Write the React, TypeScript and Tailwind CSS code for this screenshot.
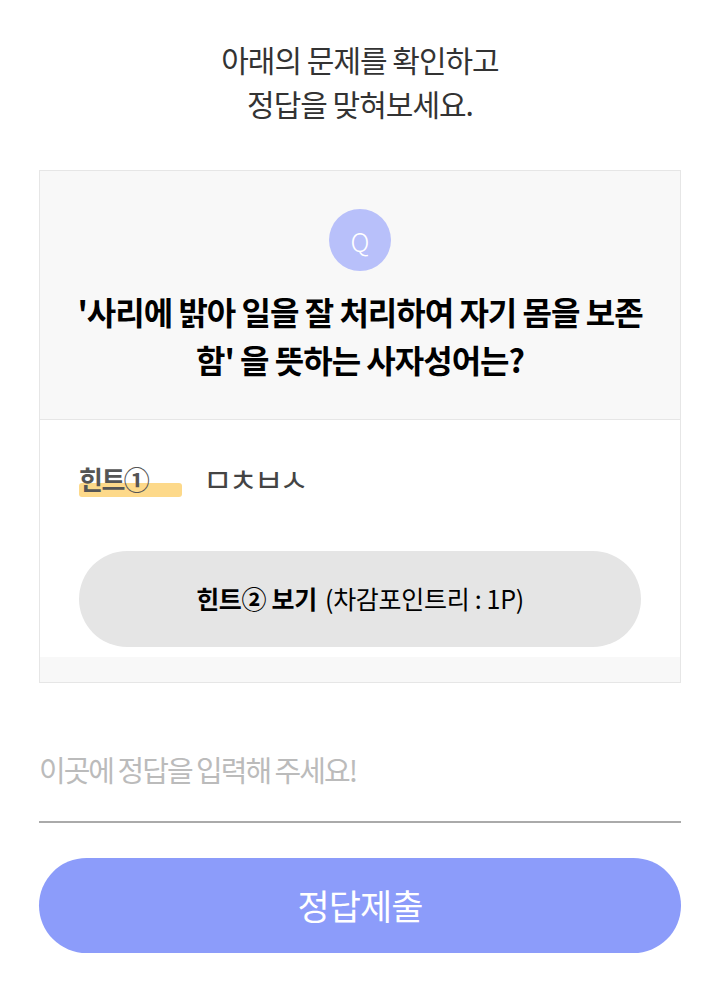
import React from "react";

const font = { fontFamily: '"Noto Sans CJK KR", "Noto Sans", sans-serif' };

export default function App() {
  return (
    <div className="w-[720px] min-h-[1003px] bg-white text-[#333]" style={font}>
      <div className="pt-[37px] text-center text-[30px] leading-[44px] text-[#333] tracking-[-1px]">
        <p>아래의 문제를 확인하고</p>
        <p>정답을 맞혀보세요.</p>
      </div>
      <div className="mx-[39px] mt-[45px] border border-[#e6e6e6]">
        <div className="bg-[#f8f8f8] border-b border-[#e6e6e6] pt-[38px] pb-[36px] flex flex-col items-center">
          <div className="w-[62px] h-[62px] rounded-full bg-[#b8c0fa] flex items-center justify-center text-white text-[26px] font-light">
            Q
          </div>
          <p className="mt-[16px] px-[10px] text-center text-[32px] leading-[48px] font-bold text-black tracking-[-1px]">
            '사리에 밝아 일을 잘 처리하여 자기 몸을 보존
            <br />
            함' 을 뜻하는 사자성어는?
          </p>
        </div>
        <div className="bg-white px-[39px] pt-[38px] pb-[10px]">
          <div className="flex items-center h-[40px]">
            <span className="relative inline-block w-[104px] text-[26px] font-bold text-[#555] tracking-[-1.5px]">
              <span className="absolute left-0 top-[24px] w-[103px] h-[14px] rounded-[3px] bg-[#fdd98a]" />
              <span className="relative">힌트①</span>
            </span>
            <span className="ml-[20px] text-[32px] leading-[40px] text-[#444] tracking-[-4px]">ㅁㅊㅂㅅ</span>
          </div>
          <div className="mt-[53px] h-[96px] rounded-full bg-[#e5e5e5] flex items-center justify-center text-[25px] text-black tracking-[-0.3px]">
            <span className="font-bold">힌트② 보기</span>
            <span className="ml-[8px]">(차감포인트리 : 1P)</span>
          </div>
        </div>
        <div className="h-[25px] bg-[#f8f8f8]" />
      </div>
      <div className="mx-[39px] mt-[64px] border-b-2 border-[#aaa] pb-[30px]">
        <p className="text-[29px] leading-[44px] text-[#bbb] tracking-[-2px]">이곳에 정답을 입력해 주세요!</p>
      </div>
      <div className="mx-[39px] mt-[35px] h-[95px] rounded-full bg-[#8c9cfa] flex items-center justify-center text-white text-[35px] tracking-[-1px]">
        정답제출
      </div>
    </div>
  );
}
